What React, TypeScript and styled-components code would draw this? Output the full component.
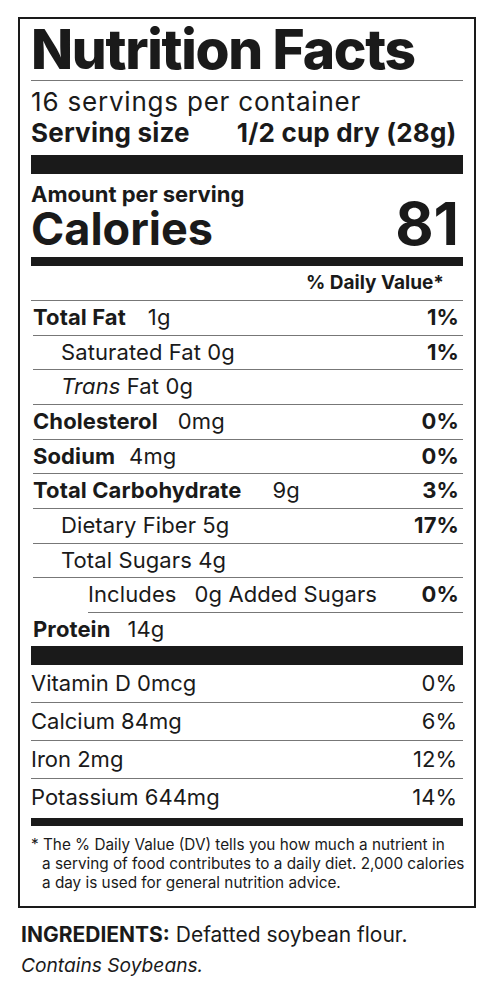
import React from 'react';
import styled, { createGlobalStyle } from 'styled-components';

const GlobalStyle = createGlobalStyle`
  body {
    margin: 0;
    background: #ffffff;
    color: #1a1a1a;
    font-family: Inter, "Noto Sans", sans-serif;
  }
`;

const Page = styled.main`
  padding: 17px 0 0 18px;
`;

const Label = styled.section`
  width: 458px;
  box-sizing: border-box;
  border: 2px solid #1a1a1a;
  padding: 0 11px 14px;
`;

const Title = styled.h1`
  margin: 0;
  font-size: 55px;
  font-weight: 800;
  line-height: 61px;
  letter-spacing: -1.3px;
  border-bottom: 1px solid #777;
`;

const Servings = styled.div`
  padding-top: 7px;
  font-size: 26px;
`;

const ServingsCount = styled.div`
  line-height: 28px;
  letter-spacing: 0.8px;
`;

const ServingSize = styled.div`
  display: flex;
  gap: 47px;
  font-weight: 700;
  line-height: 33px;
  letter-spacing: 0.2px;
`;

const Bar = styled.div<{ $h: number; $gap?: number }>`
  height: ${(p) => p.$h}px;
  margin-top: ${(p) => p.$gap ?? 0}px;
  background: #1a1a1a;
`;

const CaloriesBlock = styled.div`
  display: flex;
  justify-content: space-between;
  align-items: last baseline;
  padding-top: 8px;
  font-weight: 700;
`;

const Amount = styled.div`
  font-size: 22px;
  line-height: 24px;
`;

const CaloriesLabel = styled.div`
  font-size: 45px;
  line-height: 40px;
  padding-top: 3px;
`;

const CaloriesValue = styled.div`
  font-size: 59px;
  line-height: 38px;
  padding-right: 4px;
`;

const DailyHead = styled.div`
  padding: 5px 19px 5px 0;
  text-align: right;
  font-size: 19px;
  font-weight: 700;
  line-height: 24px;
  border-bottom: 1px solid #777;
`;

const Row = styled.div<{ $indent?: number; $last?: boolean }>`
  display: flex;
  align-items: baseline;
  height: ${(p) => (p.$last ? 33 : 33.67)}px;
  margin-left: ${(p) => 2 + (p.$indent ?? 0)}px;
  padding-right: 4px;
  font-size: 22px;
  letter-spacing: 0.1px;
  line-height: 33.67px;
  border-bottom: ${(p) => (p.$last ? 'none' : '1px solid #777')};
`;

const Name = styled.span<{ $gap?: number }>`
  font-weight: 700;
  margin-right: ${(p) => p.$gap ?? 10}px;
`;

const Sub = styled.span<{ $pad?: number }>`
  padding-left: ${(p) => p.$pad ?? 28}px;
`;

const Pct = styled.span`
  margin-left: auto;
  font-weight: 700;
`;

const VitRow = styled.div<{ $last?: boolean }>`
  display: flex;
  justify-content: space-between;
  height: ${(p) => (p.$last ? 39 : 37)}px;
  padding-right: 6px;
  font-size: 22px;
  line-height: 37px;
  border-bottom: ${(p) => (p.$last ? 'none' : '1px solid #777')};
`;

const Footnote = styled.p`
  margin: 9px 0 0;
  padding-left: 11px;
  text-indent: -11px;
  font-size: 15.3px;
  line-height: 19px;
  white-space: nowrap;
`;

const Ingredients = styled.div`
  margin-top: 12px;
  padding-left: 3px;
  font-size: 21px;
  line-height: 30px;
`;

const Contains = styled.div`
  font-size: 19.2px;
  font-style: italic;
`;

const Strong = styled.b`
  font-weight: 700;
`;

export default function App() {
  return (
    <Page>
      <GlobalStyle />
      <Label>
        <Title>Nutrition Facts</Title>
        <Servings>
          <ServingsCount>16 servings per container</ServingsCount>
          <ServingSize>
            <span>Serving size</span>
            <span>1/2 cup dry (28g)</span>
          </ServingSize>
        </Servings>
        <Bar $h={19} $gap={6} />

        <CaloriesBlock>
          <div>
            <Amount>Amount per serving</Amount>
            <CaloriesLabel>Calories</CaloriesLabel>
          </div>
          <CaloriesValue>81</CaloriesValue>
        </CaloriesBlock>
        <Bar $h={9} $gap={8} />

        <DailyHead>% Daily Value*</DailyHead>

        <Row>
          <Name $gap={22}>Total Fat</Name>
          <span>1g</span>
          <Pct>1%</Pct>
        </Row>
        <Row>
          <Sub>Saturated Fat 0g</Sub>
          <Pct>1%</Pct>
        </Row>
        <Row>
          <Sub>
            <i>Trans</i> Fat 0g
          </Sub>
        </Row>
        <Row>
          <Name $gap={20}>Cholesterol</Name>
          <span>0mg</span>
          <Pct>0%</Pct>
        </Row>
        <Row>
          <Name $gap={14}>Sodium</Name>
          <span>4mg</span>
          <Pct>0%</Pct>
        </Row>
        <Row>
          <Name $gap={31}>Total Carbohydrate</Name>
          <span>9g</span>
          <Pct>3%</Pct>
        </Row>
        <Row>
          <Sub>Dietary Fiber 5g</Sub>
          <Pct>17%</Pct>
        </Row>
        <Row>
          <Sub>Total Sugars 4g</Sub>
        </Row>
        <Row $indent={55}>
          <Sub $pad={0}>Includes</Sub>
          <Sub $pad={18}>0g Added Sugars</Sub>
          <Pct>0%</Pct>
        </Row>
        <Row $last>
          <Name $gap={17}>Protein</Name>
          <span>14g</span>
        </Row>
        <Bar $h={19} />

        <VitRow>
          <span>Vitamin D 0mcg</span>
          <span>0%</span>
        </VitRow>
        <VitRow>
          <span>Calcium 84mg</span>
          <span>6%</span>
        </VitRow>
        <VitRow>
          <span>Iron 2mg</span>
          <span>12%</span>
        </VitRow>
        <VitRow $last>
          <span>Potassium 644mg</span>
          <span>14%</span>
        </VitRow>
        <Bar $h={8} />

        <Footnote>
          * The % Daily Value (DV) tells you how much a nutrient in
          <br />
          a serving of food contributes to a daily diet. 2,000 calories
          <br />
          a day is used for general nutrition advice.
        </Footnote>
      </Label>

      <Ingredients>
        <div>
          <Strong>INGREDIENTS:</Strong> Defatted soybean flour.
        </div>
        <Contains>Contains Soybeans.</Contains>
      </Ingredients>
    </Page>
  );
}
